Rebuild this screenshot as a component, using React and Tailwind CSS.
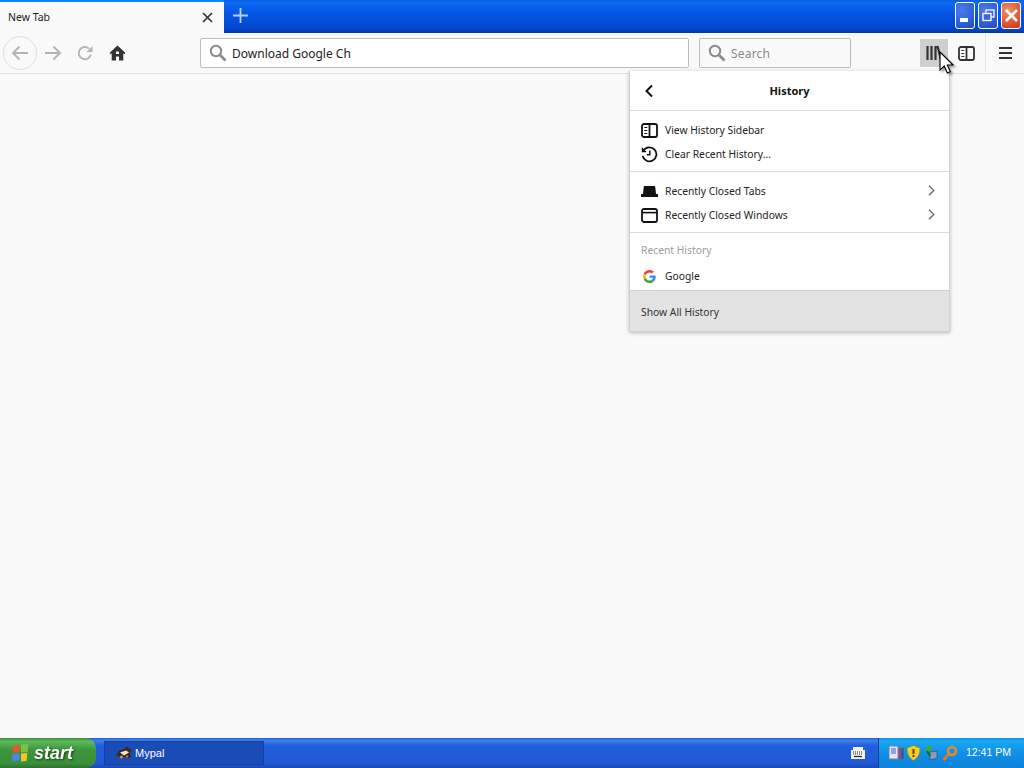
import React from 'react';

const uiFont = "font-['Noto_Sans','Open_Sans',sans-serif]";

const SearchIcon = () => (
  <svg width="18" height="18" viewBox="0 0 18 18" fill="none" stroke="#8a8a8c" strokeWidth="2">
    <circle cx="7" cy="7" r="5.2" />
    <path d="M11 11l5.5 5.5" strokeWidth="2.6" />
  </svg>
);

const SidebarIcon = ({ color = '#111' }) => (
  <svg width="17" height="15" viewBox="0 0 17 15" fill="none" stroke={color} strokeWidth="1.8">
    <rect x="1" y="1" width="15" height="13" rx="2" />
    <path d="M8.5 1v13" />
    <path d="M3.3 4.5h3M3.3 7.5h3M3.3 10.5h3" strokeWidth="1.2" />
  </svg>
);

const HistoryIcon = () => (
  <svg width="17" height="17" viewBox="0 0 17 17" fill="none" stroke="#111" strokeWidth="1.8">
    <path d="M2.6 4.4A7 7 0 1 1 1.6 10" />
    <path d="M1 1.6v4.2h4.2" fill="#111" stroke="none" />
    <path d="M1.4 1.8l0 3.8 3.8 0" strokeWidth="1.3" />
    <path d="M8.8 4.6v4.2H5.8" strokeWidth="1.5" />
  </svg>
);

const HatIcon = () => (
  <svg width="17" height="11" viewBox="0 0 17 11">
    <path d="M4 0h9c.8 0 1.200.5 1.300 1.200L15 8h2v3H0V8h2l.7-6.800C2.800.5 3.200 0 4 0z" fill="#111" />
  </svg>
);

const WindowIcon = () => (
  <svg width="17" height="15" viewBox="0 0 17 15" fill="none" stroke="#111" strokeWidth="1.8">
    <rect x="1" y="1" width="15" height="13" rx="2" />
    <path d="M1 4.6h15" strokeWidth="1.6" />
  </svg>
);

const GoogleIcon = () => (
  <svg width="13" height="13" viewBox="0 0 48 48">
    <path fill="#EA4335" d="M24 9.5c3.5 0 6.700 1.200 9.200 3.600l6.900-6.900C35.900 2.400 30.400 0 24 0 14.600 0 6.500 5.400 2.600 13.200l8 6.200C12.500 13.600 17.800 9.500 24 9.500z" />
    <path fill="#4285F4" d="M47 24.500c0-1.600-.1-3.100-.4-4.500H24v9h13c-.6 3-2.300 5.500-4.800 7.200l7.800 6C44.400 38.100 47 31.900 47 24.500z" />
    <path fill="#FBBC05" d="M10.600 28.600c-.5-1.400-.8-3-.8-4.600s.3-3.200.8-4.600l-8-6.200C.9 16.500 0 20.100 0 24s.9 7.500 2.600 10.800l8-6.200z" />
    <path fill="#34A853" d="M24 48c6.500 0 11.900-2.100 15.900-5.800l-7.800-6c-2.100 1.400-4.900 2.300-8.100 2.300-6.200 0-11.500-4.100-13.400-9.900l-8 6.200C6.500 42.600 14.600 48 24 48z" />
  </svg>
);

const Cursor = () => (
  <svg className="absolute left-[939px] top-[51px] drop-shadow-[2px_2px_1px_rgba(0,0,0,0.35)]" width="15" height="25" viewBox="0 0 15 25">
    <path d="M1 1v18l4.300-4 3 7 3-1.300-3-6.700h5.800z" fill="#fff" stroke="#000" strokeWidth="1.100" />
  </svg>
);

const CaptionButton = ({ className, children }) => (
  <div className={`w-[20px] h-[27px] rounded-[3px] border border-white flex items-center justify-center relative ${className}`}>
    {children}
  </div>
);

const MenuRow = ({ icon, label, arrow }) => (
  <div className="h-6 flex items-center pl-[11px] pr-[14px]">
    <div className="w-[17px] flex justify-center shrink-0">{icon}</div>
    <span className="ml-[7px] mt-[2px] text-[10.3px] text-[#222] flex-1">{label}</span>
    {arrow && (
      <svg className="mb-[2px]" width="7" height="11" viewBox="0 0 7 11" fill="none" stroke="#666" strokeWidth="1.300">
        <path d="M1 .7l4.800 4.800L1 10.300" />
      </svg>
    )}
  </div>
);

const HistoryPanel = () => (
  <div className={`absolute left-[629px] top-[71px] w-[321px] h-[261px] bg-white border border-[#d0d0d0] border-t-0 shadow-[0_1px_4px_rgba(0,0,0,0.25)] flex flex-col ${uiFont}`}>
    <div className="h-10 flex items-center justify-center border-b border-[#dcdcdc] relative shrink-0">
      <svg className="absolute left-[13px] top-[13px]" width="12" height="14" viewBox="0 0 12 14" fill="none" stroke="#111" strokeWidth="2">
        <path d="M9 1.500L3.500 7 9 12.500" />
      </svg>
      <span className="pt-[2px] text-[11px] font-bold text-[#111]">History</span>
    </div>
    <div className="h-[61px] pt-[7px] border-b border-[#dcdcdc] shrink-0">
      <MenuRow icon={<SidebarIcon />} label="View History Sidebar" />
      <MenuRow icon={<HistoryIcon />} label="Clear Recent History..." />
    </div>
    <div className="h-[61px] pt-[7px] border-b border-[#dcdcdc] shrink-0">
      <MenuRow icon={<HatIcon />} label="Recently Closed Tabs" arrow />
      <MenuRow icon={<WindowIcon />} label="Recently Closed Windows" arrow />
    </div>
    <div className="flex-1">
      <div className="mt-[3px] h-[28px] pl-[11px] pt-[2px] flex items-center text-[10.3px] text-[#9b9b9b]">Recent History</div>
      <MenuRow icon={<GoogleIcon />} label="Google" />
    </div>
    <div className="h-[41px] shrink-0 bg-[#e3e3e4] border-t border-[#cfcfcf] pl-[11px] pt-[3px] flex items-center text-[10.3px] text-[#333]">
      Show All History
    </div>
  </div>
);

const Toolbar = () => (
  <div className={`h-[41px] bg-[#f9f9fa] border-b border-[#e0e0e1] flex items-center relative shrink-0 ${uiFont}`}>
    <div className="w-[34px] h-[34px] ml-[3px] rounded-full border border-[#dedede] flex items-center justify-center">
      <svg width="18" height="16" viewBox="0 0 18 16" fill="none" stroke="#b4b4b4" strokeWidth="1.900">
        <path d="M17 8H2M8.500 1.500L2 8l6.500 6.500" />
      </svg>
    </div>
    <svg className="ml-[7px]" width="18" height="16" viewBox="0 0 18 16" fill="none" stroke="#b4b4b4" strokeWidth="1.900">
      <path d="M1 8h15M9.500 1.500L16 8l-6.500 6.500" />
    </svg>
    <svg className="ml-[15px]" width="16" height="16" viewBox="0 0 16 16" fill="none" stroke="#b4b4b4" strokeWidth="1.900">
      <path d="M13.800 9.500A6.100 6.100 0 1 1 12 3.600" />
      <path d="M15.500 1v6h-6z" fill="#b4b4b4" stroke="none" />
    </svg>
    <svg className="ml-[16px]" width="17" height="16" viewBox="0 0 17 16">
      <path d="M8.500 0.500L0.500 8l1.200 1.200 1-.9V15.500h4.300v-4h3v4h4.300V8.300l1 .9L16.500 8z" fill="#333" />
      <rect x="7" y="6.500" width="3" height="2.500" fill="#f9f9fa" />
    </svg>
    <div className="ml-[74px] w-[489px] h-[30px] bg-white border border-[#bdbdbd] rounded-[2px] flex items-center pl-2 shrink-0">
      <SearchIcon />
      <span className="ml-[5px] mt-[2px] text-[12px] text-[#222]">Download Google Ch</span>
    </div>
    <div className="ml-[10px] w-[152px] h-[30px] bg-[#f9f9fa] border border-[#bdbdbd] rounded-[2px] flex items-center pl-2 shrink-0">
      <SearchIcon />
      <span className="ml-[5px] mt-[2px] text-[12px] text-[#8a8a8a] tracking-[0.2px]">Search</span>
    </div>
    <div className="ml-[69px] w-[28px] h-[28px] bg-[#cfcfd0] flex items-center justify-center shrink-0">
      <svg width="16" height="16" viewBox="0 0 16 16" stroke="#333" fill="none" strokeWidth="2.200">
        <path d="M1.500 1v14M5.500 1v14M9.500 1v14M11.500 1l3.500 14" />
      </svg>
    </div>
    <div className="ml-[10px] shrink-0 flex"><SidebarIcon color="#333" /></div>
    <div className="ml-[10px] w-px h-[38px] bg-[#e6e6e6] shrink-0" />
    <svg className="ml-[13px] shrink-0" width="13" height="12" viewBox="0 0 13 12" fill="#333">
      <rect width="13" height="2" />
      <rect y="5" width="13" height="2" />
      <rect y="10" width="13" height="2" />
    </svg>
  </div>
);

const TitleBar = () => (
  <div className={`h-[33px] flex bg-[linear-gradient(180deg,#0a5ee0_0%,#0a6af2_8%,#0453e4_45%,#0348d0_85%,#0437a8_100%)] shrink-0 ${uiFont}`}>
    <div className="w-[224px] bg-[#f9f9fa] border-t-2 border-[#0a84ff] flex items-center justify-between pl-2 pr-[11px]">
      <span className="text-[10.5px] text-[#222]">New Tab</span>
      <svg width="11" height="11" viewBox="0 0 11 11" stroke="#333" strokeWidth="1.700">
        <path d="M1 1l9 9M10 1l-9 9" />
      </svg>
    </div>
    <svg className="ml-[9px] mt-[8px]" width="15" height="15" viewBox="0 0 15 15" stroke="#b7d4fb" strokeWidth="1.800">
      <path d="M7.500 0v15M0 7.500h15" />
    </svg>
    <div className="ml-auto flex gap-[3px] pt-[2px] pr-[3px]">
      <CaptionButton className="bg-[radial-gradient(circle_at_30%_30%,#4a7cec,#2a5ad8_70%,#2048b8)]">
        <div className="absolute left-[4px] top-[15px] w-[8px] h-[4px] bg-white" />
      </CaptionButton>
      <CaptionButton className="bg-[radial-gradient(circle_at_30%_30%,#4a7cec,#2a5ad8_70%,#2048b8)]">
        <svg width="13" height="13" viewBox="0 0 13 13" fill="none" stroke="#fff" strokeWidth="1.300">
          <rect x="4" y="1" width="8" height="7" />
          <rect x="1" y="4.500" width="8" height="7" fill="#3a68de" />
        </svg>
      </CaptionButton>
      <CaptionButton className="bg-[radial-gradient(circle_at_30%_30%,#f0906a,#dd5230_65%,#c03a18)]">
        <svg width="13" height="13" viewBox="0 0 13 13" stroke="#fff" strokeWidth="2.600">
          <path d="M1 1l11 11M12 1L1 12" />
        </svg>
      </CaptionButton>
    </div>
  </div>
);

const Taskbar = () => (
  <div className="h-[30px] flex items-center bg-[linear-gradient(180deg,#1f5fd8_0%,#3a80ea_8%,#2260de_25%,#2059d6_80%,#1a49b8_100%)] shrink-0 font-['Liberation_Sans',sans-serif] relative">
    <div className="w-[96px] h-full rounded-r-[10px] bg-[linear-gradient(180deg,#3f8f3f_0%,#5cb85a_12%,#3d953d_40%,#3a8f3a_85%,#2f6f2f_100%)] flex items-center pl-[11px] shrink-0">
      <svg width="19" height="20" viewBox="0 0 18 18">
        <path d="M2 2.500l6-1.500v7L1.500 9z" fill="#e8552a" />
        <path d="M9.500 1l7-.5-.8 7.500-6.200.5z" fill="#7cc13e" />
        <path d="M1.500 10L8 9.500V16l-7 1z" fill="#4a87e8" />
        <path d="M9.500 9.500l6-.5-.8 7.500-5.200.5z" fill="#f4c52a" />
      </svg>
      <span className="ml-[4px] text-[18px] font-bold italic text-white leading-none drop-shadow-[1px_1px_1px_rgba(0,0,0,0.6)]">start</span>
    </div>
    <div className="ml-2 w-[160px] h-[24px] bg-[#1a4cb8] border border-[#163f9e] flex items-center pl-[11px] shrink-0">
      <svg width="16" height="15" viewBox="0 0 16 14">
        <path d="M0 9l3-5 4-1 4-3 2 2 3 1-2 3 1 4-3 2-3-2-3 2-2-2z" fill="#3a2a1c" />
        <path d="M4 6l6-2 3 2-5 3z" fill="#efe6cc" />
        <circle cx="5.500" cy="10.500" r="1.600" fill="#d88c3a" />
        <circle cx="11" cy="10" r="1.200" fill="#b0703a" />
      </svg>
      <span className="ml-[3px] text-[11px] text-white">Mypal</span>
    </div>
    <svg className="ml-auto mr-[13px]" width="14" height="12" viewBox="0 0 14 12">
      <path d="M2 0h10v3h2v9H0V3h2z" fill="#f2f2f2" />
      <path d="M2 5h10M2 7h10" stroke="#222" strokeWidth="1" strokeDasharray="1 1" />
      <path d="M3 9.500h8" stroke="#222" strokeWidth="1.200" />
    </svg>
    <div className="w-[146px] h-full bg-[linear-gradient(180deg,#0f8fe8_0%,#19a8f2_10%,#1090e6_50%,#0d82d8_100%)] border-l border-[#0b3f9a] flex items-center pl-[9px] shrink-0">
      <svg width="16" height="16" viewBox="0 0 16 16">
        <rect x="1" y="1" width="9" height="13" fill="#e4e8f4" stroke="#6a7cb8" />
        <rect x="3" y="3" width="5" height="6" fill="#8fa6dc" />
        <rect x="11" y="3" width="2" height="11" fill="#c23a4a" />
        <rect x="13.500" y="3" width="2" height="11" fill="#3a4a8a" />
      </svg>
      <svg className="ml-[2px]" width="15" height="16" viewBox="0 0 15 16">
        <path d="M7.500 0.500L14 3c0 6-2 10-6.500 12.500C3 13 1 9 1 3z" fill="#f4d02a" stroke="#8a7a20" strokeWidth="0.600" />
        <rect x="6.500" y="4" width="2" height="5" fill="#7a3a10" />
        <rect x="6.500" y="10" width="2" height="2" fill="#7a3a10" />
      </svg>
      <svg className="ml-[3px]" width="15" height="16" viewBox="0 0 15 16">
        <path d="M2 1h6v5H2z" fill="#3aa84a" />
        <path d="M6 7l7-1v7l-7 2z" fill="#8a9ab8" stroke="#2a4a5a" strokeWidth="0.600" />
        <path d="M3 6l3 5" stroke="#1a6a2a" strokeWidth="2" />
      </svg>
      <svg className="ml-[3px]" width="16" height="16" viewBox="0 0 16 16" fill="none">
        <circle cx="10" cy="6" r="4" stroke="#f08a1e" strokeWidth="2.400" />
        <path d="M7 9l-5.500 6" stroke="#e8781a" strokeWidth="2.600" />
      </svg>
      <span className="ml-[8px] text-[10.5px] text-white">12:41 PM</span>
    </div>
  </div>
);

export default function App() {
  return (
    <div className="w-[1024px] h-[768px] flex flex-col bg-[#f9f9fa] overflow-hidden relative">
      <TitleBar />
      <Toolbar />
      <div className="flex-1 bg-[#f9f9fa]" />
      <Taskbar />
      <HistoryPanel />
      <Cursor />
    </div>
  );
}
